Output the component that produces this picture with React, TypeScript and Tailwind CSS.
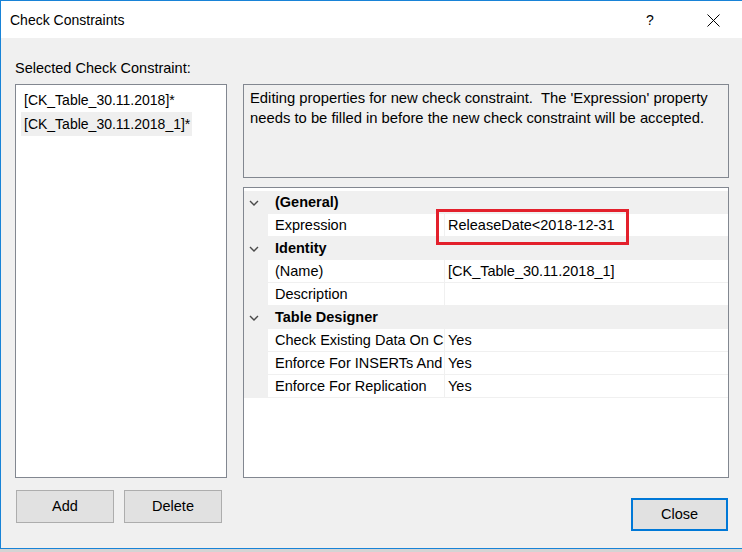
import React from "react";

const font = { fontFamily: '"Liberation Sans", Arial, sans-serif' };

type Row =
  | { kind: "cat"; label: string }
  | { kind: "prop"; name: string; value: string };

const rows: Row[] = [
  { kind: "cat", label: "(General)" },
  { kind: "prop", name: "Expression", value: "ReleaseDate<2018-12-31" },
  { kind: "cat", label: "Identity" },
  { kind: "prop", name: "(Name)", value: "[CK_Table_30.11.2018_1]" },
  { kind: "prop", name: "Description", value: "" },
  { kind: "cat", label: "Table Designer" },
  { kind: "prop", name: "Check Existing Data On Creation Or Re-Enabling", value: "Yes" },
  { kind: "prop", name: "Enforce For INSERTs And UPDATEs", value: "Yes" },
  { kind: "prop", name: "Enforce For Replication", value: "Yes" },
];

function Chevron() {
  return (
    <svg width="10" height="6" viewBox="0 0 10 6" className="block">
      <path d="M1 1 L5 5 L9 1" fill="none" stroke="#4a4a4a" strokeWidth="1.4" />
    </svg>
  );
}

export default function App() {
  return (
    <div className="w-[742px] h-[552px] bg-[#d4d4d4] text-[14px] text-black" style={font}>
      <div className="h-[549px] bg-[#f0f0f0] border-l border-t border-b border-[#1883d7] flex flex-col">
        {/* title bar */}
        <div className="h-[37px] bg-white flex items-center shrink-0">
          <div className="pl-[9px] pt-[2px] flex-1 text-[14px]">Check Constraints</div>
          <div className="w-[20px] text-center text-[14px] pt-[2px] mr-[47px]">?</div>
          <svg width="13" height="13" viewBox="0 0 13 13" className="mr-[22px] mt-[2px]">
            <path d="M0.5 0.5 L12.5 12.5 M12.5 0.5 L0.5 12.5" stroke="#000" strokeWidth="1" />
          </svg>
        </div>

        {/* body */}
        <div className="flex pl-[14px] pr-[12px]">
          <div className="w-[212px] flex flex-col">
            <div className="h-[20px] leading-[20px] mt-[20px] text-[14.5px]">Selected Check Constraint:</div>
            <div className="mt-[6px] h-[394px] bg-white border border-[#828790] pt-[4px] pl-[5px]">
              <div className="h-[22px] leading-[22px] pl-[3px]">[CK_Table_30.11.2018]*</div>
              <div className="h-[24px] leading-[24px] pl-[3px] w-[171px] bg-[#efefef] mt-[1px]">
                [CK_Table_30.11.2018_1]*
              </div>
            </div>
          </div>
          <div className="ml-[16px] w-[486px] flex flex-col mt-[46px]">
            <div className="h-[94px] border border-[#828790] bg-[#f0f0f0] pl-[6px] pt-[3px] leading-[20px] whitespace-pre text-[14.8px]">
              <div>Editing properties for new check constraint.  The 'Expression' property</div>
              <div>needs to be filled in before the new check constraint will be accepted.</div>
            </div>
            <div className="relative mt-[9px] h-[291px] border border-[#828790] bg-white pt-[3px] text-[14.5px]">
              {rows.map((r, i) =>
                r.kind === "cat" ? (
                  <div key={i} className="h-[23px] flex items-center bg-[#f0f0f0]">
                    <div className="w-[24px] pl-[5px]">
                      <Chevron />
                    </div>
                    <div className="pl-[7px] font-bold">{r.label}</div>
                  </div>
                ) : (
                  <div key={i} className="h-[23px] flex">
                    <div className="w-[24px] bg-[#f0f0f0]" />
                    <div className="w-[176px] border-b border-[#f0f0f0] pl-[7px] leading-[23px] overflow-hidden whitespace-nowrap">
                      {r.name}
                    </div>
                    <div className="w-[1px] bg-[#f0f0f0]" />
                    <div className="flex-1 border-b border-[#f0f0f0] pl-[3px] leading-[23px] whitespace-nowrap">
                      {r.value}
                    </div>
                  </div>
                )
              )}
              <div className="absolute left-[192px] top-[21px] w-[193px] h-[36px] border-[3px] border-[#e3202c]" />
            </div>
          </div>
        </div>

        {/* buttons */}
        <div className="flex pl-[15px] pr-[14px] mt-[12px]">
          <button className="w-[98px] h-[33px] bg-[#e1e1e1] border border-[#adadad] text-[14.5px]">Add</button>
          <button className="ml-[10px] w-[98px] h-[33px] bg-[#e1e1e1] border border-[#adadad] text-[14.5px]">Delete</button>
          <div className="flex-1" />
          <button className="mt-[8px] w-[97px] h-[33px] bg-[#e1e1e1] border-2 border-[#0078d7] text-[14.5px]">Close</button>
        </div>
      </div>
    </div>
  );
}
